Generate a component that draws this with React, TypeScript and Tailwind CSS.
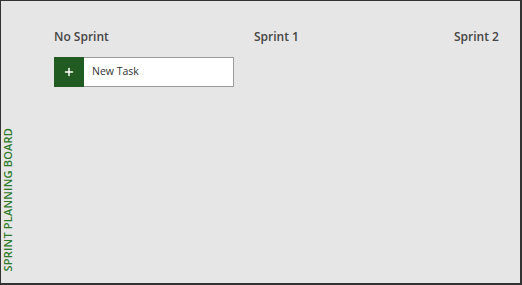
import { Plus } from "lucide-react";

const sprints = ["No Sprint", "Sprint 1", "Sprint 2"];

export default function App() {
  return (
    <div
      className="w-[522px] h-[285px] bg-[#e6e6e6] border-t border-l border-r-2 border-b-2 border-[#333333] flex overflow-hidden"
      style={{ fontFamily: '"Open Sans", "Noto Sans", sans-serif' }}
    >
      <div className="w-[15px] shrink-0 flex flex-col justify-end pb-[12px]">
        <span className="[writing-mode:vertical-rl] rotate-180 text-[11px] leading-[14px] font-semibold text-[#2f7a2a] tracking-[0.2px] whitespace-nowrap">
          SPRINT PLANNING BOARD
        </span>
      </div>
      <div className="flex-1 pl-[38px] pt-[26px] flex gap-[20px]">
        {sprints.map((name, i) => (
          <div key={i} className="w-[180px] shrink-0">
            <h2 className="text-[12px] leading-[20px] font-semibold text-[#454545] mb-[10px]">
              {name}
            </h2>
            {i === 0 && (
              <button className="w-[180px] h-[30px] flex items-stretch bg-white border border-[#9a9a9a] text-left">
                <span className="w-[30px] -ml-px -my-px h-[30px] bg-[#215b21] flex items-center justify-center">
                  <Plus className="w-[12px] h-[12px] text-white" strokeWidth={3} />
                </span>
                <span className="flex items-center pl-[8px] text-[10.5px] text-[#333333]">
                  New Task
                </span>
              </button>
            )}
          </div>
        ))}
      </div>
    </div>
  );
}
